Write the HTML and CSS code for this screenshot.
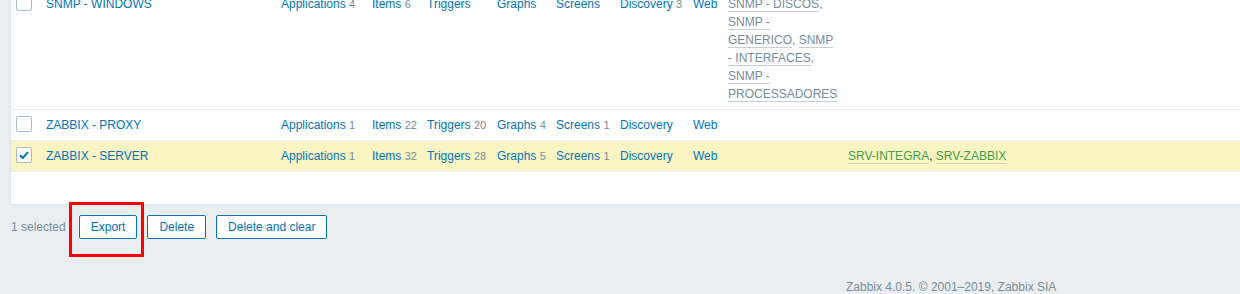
FILE: index.html
```html
<!DOCTYPE html>
<html lang="en">
<head>
    <meta charset="UTF-8">
    <meta name="viewport" content="width=device-width, initial-scale=1.0">
    <title>Templates</title>
    <link rel="stylesheet" href="styles.css">
</head>
<body>

    <div class="page">

        <!-- Templates list -->
        <div class="list-box">
            <table class="list-table">
                <colgroup>
                    <col class="col-check">
                    <col class="col-name">
                    <col class="col-apps">
                    <col class="col-items">
                    <col class="col-triggers">
                    <col class="col-graphs">
                    <col class="col-screens">
                    <col class="col-discovery">
                    <col class="col-web">
                    <col class="col-templates">
                    <col>
                </colgroup>
                <tbody>
                    <tr>
                        <td><span class="checkbox"></span></td>
                        <td><a href="#">SNMP - WINDOWS</a></td>
                        <td><a href="#">Applications</a> <span class="count">4</span></td>
                        <td><a href="#">Items</a> <span class="count">6</span></td>
                        <td><a href="#">Triggers</a></td>
                        <td><a href="#">Graphs</a></td>
                        <td><a href="#">Screens</a></td>
                        <td><a href="#">Discovery</a> <span class="count">3</span></td>
                        <td><a href="#">Web</a></td>
                        <td class="wrap"><a class="link-alt" href="#">SNMP - DISCOS</a>, <a class="link-alt" href="#">SNMP - GENERICO</a>, <a class="link-alt" href="#">SNMP - INTERFACES</a>, <a class="link-alt" href="#">SNMP - PROCESSADORES</a></td>
                        <td></td>
                    </tr>
                    <tr>
                        <td><span class="checkbox"></span></td>
                        <td><a href="#">ZABBIX - PROXY</a></td>
                        <td><a href="#">Applications</a> <span class="count">1</span></td>
                        <td><a href="#">Items</a> <span class="count">22</span></td>
                        <td><a href="#">Triggers</a> <span class="count">20</span></td>
                        <td><a href="#">Graphs</a> <span class="count">4</span></td>
                        <td><a href="#">Screens</a> <span class="count">1</span></td>
                        <td><a href="#">Discovery</a></td>
                        <td><a href="#">Web</a></td>
                        <td></td>
                        <td></td>
                    </tr>
                    <tr class="selected">
                        <td>
                            <span class="checkbox checked">
                                <svg width="10" height="8" viewBox="0 0 10 8"><path d="M1 4.2 L3.8 7 L9 1.2" fill="none" stroke="#0275b8" stroke-width="2"/></svg>
                            </span>
                        </td>
                        <td><a href="#">ZABBIX - SERVER</a></td>
                        <td><a href="#">Applications</a> <span class="count">1</span></td>
                        <td><a href="#">Items</a> <span class="count">32</span></td>
                        <td><a href="#">Triggers</a> <span class="count">28</span></td>
                        <td><a href="#">Graphs</a> <span class="count">5</span></td>
                        <td><a href="#">Screens</a> <span class="count">1</span></td>
                        <td><a href="#">Discovery</a></td>
                        <td><a href="#">Web</a></td>
                        <td></td>
                        <td><a class="link-host" href="#">SRV-INTEGRA</a>, <a class="link-host" href="#">SRV-ZABBIX</a></td>
                    </tr>
                </tbody>
            </table>
        </div>

        <!-- Mass actions -->
        <div class="action-bar">
            <span class="selected-count">1 selected</span>
            <span class="marked">
                <button class="btn">Export</button>
                <span class="red-frame"></span>
            </span>
            <button class="btn">Delete</button>
            <button class="btn">Delete and clear</button>
        </div>

        <div class="footer">Zabbix 4.0.5. &copy; 2001&ndash;2019, Zabbix SIA</div>
    </div>

</body>
</html>
```

FILE: styles.css
```css
* { margin: 0; padding: 0; box-sizing: border-box; }
html, body { overflow: hidden; }
body {
    font-family: "Liberation Sans", Arial, sans-serif;
    font-size: 12px;
    background: #ebeef0;
    color: #1f2c33;
}

.page {
    padding-left: 10px;
}

a { color: #0275b8; text-decoration: none; }

/* List */
.list-box {
    margin-top: -12px;
    background: #fff;
    border: 1px solid #dfe4e7;
    border-right: none;
    padding-bottom: 32px;
}
.list-table {
    width: 100%;
    border-collapse: collapse;
    table-layout: fixed;
}
.list-table td {
    padding: 6px 5px;
    line-height: 18px;
    vertical-align: top;
    white-space: nowrap;
    border-bottom: 1px solid #ebeef0;
}
.list-table td.wrap { white-space: normal; color: #768d99; }
.list-table tr.selected td { background: #fbf5c3; }

.col-check { width: 30px; }
.col-name { width: 235px; }
.col-apps { width: 91px; }
.col-items { width: 55px; }
.col-triggers { width: 70px; }
.col-graphs { width: 59px; }
.col-screens { width: 64px; }
.col-discovery { width: 73px; }
.col-web { width: 35px; }
.col-templates { width: 120px; }

.count { color: #768d99; font-size: 11px; }

.checkbox {
    display: inline-flex;
    align-items: center;
    justify-content: center;
    width: 16px; height: 16px;
    background: #fff;
    border: 1px solid #acbbc2;
    border-radius: 2px;
    vertical-align: top;
}

.link-alt {
    color: #768d99;
    border-bottom: 1px solid #c5d0d5;
}
.link-host {
    color: #429e47;
    border-bottom: 1px solid #c9d8b8;
}

/* Actions */
.action-bar {
    display: flex;
    align-items: center;
    gap: 10px;
    margin-top: 10px;
    padding-left: 1px;
}
.selected-count { color: #768d99; margin-right: 3px; }
.btn {
    height: 24px;
    padding: 0 11px;
    background: #fff;
    border: 1px solid #0275b8;
    border-radius: 2px;
    color: #0275b8;
    font-family: inherit;
    font-size: 12px;
}
.marked { position: relative; display: flex; }
.red-frame {
    position: absolute;
    left: -10px; top: -13px;
    width: 75px; height: 55px;
    border: 3px solid #f00;
}

.footer {
    margin-top: 41px;
    padding-left: 836px;
    line-height: 14px;
    color: #768d99;
}
```
